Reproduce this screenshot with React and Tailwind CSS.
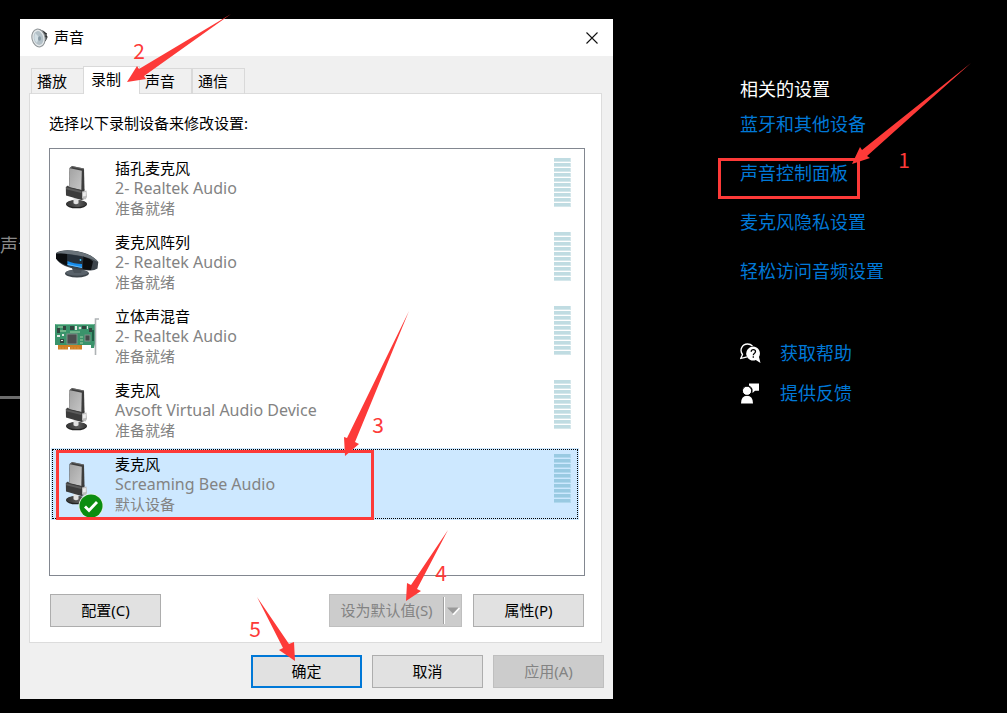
import React from "react";

const arrowShapes = {
  panel: "0,101 8,84 10,87 119,0 15,93 18,95",
  tab: "0,68 10,52 12,55 104,0 17,62 19,65",
  device: "1,145 0,126 3,127 65,0 11,131 15,133",
  setDefault: "0,71 1,53 5,55 42,0 11,59 15,61",
  ok: "38,64 22,53 26,51 0,0 32,47 37,45",
};

function Arrow({ shape, width, height, className }) {
  return (
    <svg
      aria-hidden="true"
      width={width}
      height={height}
      viewBox={`0 0 ${width} ${height}`}
      className={`pointer-events-none absolute z-20 max-w-none overflow-visible ${className}`}
    >
      <polygon points={arrowShapes[shape]} fill="#fd3a38" />
    </svg>
  );
}

function Step({ children, className }) {
  return (
    <span
      className={`pointer-events-none absolute z-20 w-4 text-center font-['Noto_Sans_CJK_SC',sans-serif] text-[21px] leading-4 text-[#fd3a38] ${className}`}
    >
      {children}
    </span>
  );
}

function SpeakerIcon() {
  return (
    <svg aria-hidden="true" width="18" height="20" viewBox="0 0 18 20">
      <path d="M8 1 L13 3 Q17 6 16 11 L12 16 L8 19Z" fill="#55595c" />
      <path d="M12 4 L16 6 M13 8 L16.500 9 M12 14 L15 12" stroke="#222" strokeWidth="1" />
      <ellipse cx="7.500" cy="10" rx="6.500" ry="9" transform="rotate(-12 7.500 10)" fill="#e4e8ea" stroke="#8d9396" strokeWidth="1" />
      <ellipse cx="7.500" cy="10" rx="4.800" ry="7" transform="rotate(-12 7.500 10)" fill="#b3c0c7" />
      <path d="M4 5 L8 9 L6 15 Q2 12 4 5Z" fill="#d3dfe5" />
      <ellipse cx="8.500" cy="10.500" rx="1.500" ry="2.200" fill="#8799a4" />
    </svg>
  );
}

function MicIcon({ id }) {
  const face = `${id}-face`;
  const base = `${id}-base`;
  return (
    <svg aria-hidden="true" width="48" height="48" viewBox="0 0 48 48">
      <defs>
        <linearGradient id={face} x1="0" y1="0" x2="1" y2="1">
          <stop offset="0" stopColor="#a2a2a2" />
          <stop offset="1" stopColor="#c6c6c6" />
        </linearGradient>
        <linearGradient id={base} x1="0" y1="0" x2="1" y2="0">
          <stop offset="0" stopColor="#333" />
          <stop offset="0.6" stopColor="#5a5a5a" />
          <stop offset="1" stopColor="#333" />
        </linearGradient>
      </defs>
      <ellipse cx="24.500" cy="42.300" rx="10.500" ry="4" fill="#222" />
      <ellipse cx="24.500" cy="41.500" rx="10.300" ry="3.600" fill={`url(#${base})`} />
      <path d="M21.500 36 H26.500 V41.300 Q24 43 21.500 41.300Z" fill="#e2e2e2" />
      <path d="M17.500 6 L20 4 L32 6.500 L32.500 28 L29 30 L17.300 26Z" fill="#3d3d3d" />
      <path d="M18 6.300 L29.800 8.700 L29.300 28 L17.300 25.500Z" fill={`url(#${face})`} />
      <path d="M18 6.300 L20.300 4.600 L31.800 7" fill="none" stroke="#777" strokeWidth="0.700" />
      <path d="M13.800 25 L16 23.500 L17.200 25 L29.300 28 L32.500 27.500 L32.500 37 L29.500 38 L14 33.500Z" fill="#3c3c3c" />
      <path d="M14 25.200 L29.300 29 V31 L14 27.200Z" fill="#5c5c5c" />
      <path d="M30 29.500 L34.500 28.500 L35 35 L33.500 37.500 L30 36.500Z" fill="#bdbdbd" />
      <path d="M31 30.500 L33.800 30 V34 L31 34.500Z" fill="#ececec" />
    </svg>
  );
}

function WebcamIcon() {
  return (
    <svg aria-hidden="true" width="48" height="48" viewBox="0 0 48 48">
      <ellipse cx="25" cy="37.500" rx="12" ry="4" fill="#3d444a" />
      <ellipse cx="25" cy="36.700" rx="11" ry="3" fill="#59626a" />
      <path d="M19 30 H31 L29 37 H22Z" fill="#4a5259" />
      <path d="M4 17 Q9 13.500 20 14.500 Q39 16.500 46.300 26 L45.500 32.500 Q42 35 37 34.500 Q23 34 13 30 Q7 27 4 22.500Z" fill="#3c444b" />
      <path d="M4 17.500 Q9 14 20 14.700 Q39 16.700 46 26 Q37 20.500 20 18.500 Q9 17 4 17.500Z" fill="#6a737a" />
      <path d="M4 17.800 Q9 17 15.500 18 V30 Q6 26 4 22.500Z" fill="#0b0d0f" />
      <path d="M31 20.500 Q37 22 41 25.500 L39 34 Q34 34 30.500 33Z" fill="#0b0d0f" />
      <path d="M15.500 18 L31.500 20.800 L30.500 32.500 L15.500 29.500Z" fill="#26303a" />
      <path d="M15.500 25 Q22 28 30 28 V32 L15.500 29Z" fill="#168cec" />
      <path d="M15.500 28 L30 31 V32 L15.500 29Z" fill="#62baf8" />
      <circle cx="28.500" cy="24" r="0.900" fill="#45caff" />
    </svg>
  );
}

function SoundCardIcon() {
  return (
    <svg aria-hidden="true" width="48" height="48" viewBox="0 0 48 48">
      <path d="M6 35 H30 V39.500 H18 V37 H16 V39.500 H6Z" fill="#cf7f24" />
      <path d="M8 37 V39 M11 37 V39 M14 37 V39 M20 37 V39 M23 37 V39 M26 37 V39" stroke="#e0a04a" strokeWidth="0.600" />
      <path d="M3 14 H43 V34 L42 38 H39 V35 H3Z" fill="#3a936b" />
      <path d="M3.500 14.500 H42" stroke="#70bc96" />
      <path d="M6 17 H11 M7 21 H14 M18 22 H28 M28 27 H31 M28 30 H31 M28 33 H31" stroke="#a4d3a7" />
      <path d="M5 18 H8 V23 H5Z M11 16 H14 V20 H11Z M18 16 H22 V20 H18Z M30 16 H34 V19 H30Z M37 18 H40 V22 H37Z M8 29 H12 V33 H8Z" fill="#32453f" />
      <path d="M5 25 H8 V27 H5Z M10 24 H12 V26 H10Z M23 16 H25 V20 H23Z M35 16 H36 V19 H35Z M9 30 H11 V31 H9Z" fill="#e4e9e5" />
      <rect x="15" y="24" width="10" height="10" fill="#4b4f4f" stroke="#7f8f89" />
      <rect x="33" y="25" width="5" height="6" fill="#434a49" stroke="#7f8f89" />
      <circle cx="28" cy="18" r="1.300" fill="#d9ddd8" />
      <path d="M47 9 H43.500 V45" fill="none" stroke="#aeb3b5" strokeWidth="1.600" />
      <path d="M41 20 V31" stroke="#174c39" strokeWidth="1.500" />
    </svg>
  );
}

function CheckBadge() {
  return (
    <svg aria-hidden="true" width="26" height="26" viewBox="0 0 26 26" className="absolute top-[35px] left-[26px]">
      <circle cx="13" cy="13" r="12.500" fill="#e3eee5" />
      <circle cx="13" cy="13" r="11.500" fill="#0b8d10" />
      <path d="M7 13.500 L11 17.500 L19 9" fill="none" stroke="#fff" strokeWidth="2.800" />
    </svg>
  );
}

function HelpIcon() {
  return (
    <svg aria-hidden="true" width="21" height="21" viewBox="0 0 21 21">
      <path d="M7 13.800 Q4.500 14.500 0.800 15.300 L2.500 11.500 Q0 8 1.700 4.600 Q3.500 1 7.500 1 Q10.500 1 12.500 3" fill="none" stroke="#fff" strokeWidth="1.300" />
      <path d="M13 3.500 a7 7 0 0 1 6 10.500 L20.500 20 L15.800 17 A7 7 0 1 1 13 3.500Z" fill="#fff" />
      <path d="M11.200 8.800 Q11.200 6.700 13.300 6.700 Q15.500 6.700 15.500 8.600 Q15.500 9.700 14.300 10.500 Q13.300 11.200 13.300 12.200 M13.300 13.300 V14.800" fill="none" stroke="#000" strokeWidth="1.300" />
    </svg>
  );
}

function FeedbackIcon() {
  return (
    <svg aria-hidden="true" width="21" height="21" viewBox="0 0 21 21">
      <path d="M1 20.500 Q1 12.700 7 12.700 Q13 12.700 13 20.500Z" fill="#fff" />
      <path d="M9 0.500 H19 V7.800 H15 L12.500 10 V6 Q11.500 3.500 9 2.500Z" fill="#fff" />
      <circle cx="7" cy="7.800" r="4.600" fill="#fff" stroke="#000" />
    </svg>
  );
}

function Meter({ active }) {
  return (
    <div aria-hidden="true" className="flex w-[17px] flex-col gap-px">
      {Array.from({ length: 10 }, (_, i) => (
        <div
          key={i}
          className={`h-1 border-r border-b ${
            active ? "border-[#b0d8ee] bg-[#99cae2]" : "border-[#d5e7eb] bg-[#c0dce2]"
          }`}
        />
      ))}
    </div>
  );
}

const devices = [
  { name: "插孔麦克风", driver: "2- Realtek Audio", state: "准备就绪", icon: <MicIcon id="jack" /> },
  { name: "麦克风阵列", driver: "2- Realtek Audio", state: "准备就绪", icon: <WebcamIcon /> },
  { name: "立体声混音", driver: "2- Realtek Audio", state: "准备就绪", icon: <SoundCardIcon /> },
  { name: "麦克风", driver: "Avsoft Virtual Audio Device", state: "准备就绪", icon: <MicIcon id="avsoft" /> },
  { name: "麦克风", driver: "Screaming Bee Audio", state: "默认设备", icon: <MicIcon id="bee" />, selected: true },
];

function Device({ device }) {
  return (
    <li
      role="option"
      aria-selected={Boolean(device.selected)}
      className={`relative flex h-[72px] pt-[6px] pr-2 ${device.selected ? "bg-[#cde8ff]" : ""}`}
    >
      {device.selected && <div className="pointer-events-none absolute inset-px border border-dotted border-black" />}
      <div className="relative mt-1 mr-[14px] ml-px h-12 w-12 shrink-0">
        {device.icon}
        {device.selected && <CheckBadge />}
      </div>
      <div className="flex-1 pl-px leading-5 text-[#838383]">
        <p className="text-black">{device.name}</p>
        <p className="text-[16px] leading-5">{device.driver}</p>
        <p>{device.state}</p>
      </div>
      <Meter active={device.selected} />
      {device.selected && (
        <>
          <div className="pointer-events-none absolute top-[2px] left-[5px] h-[70px] w-[318px] border-3 border-[#fd3a38]" />
          <Arrow shape="device" width={65} height={145} className="-top-[137px] left-[293px]" />
          <Step className="-top-8 left-[319px]">3</Step>
        </>
      )}
    </li>
  );
}

function PushButton({ children, kind = "normal" }) {
  const looks = {
    normal: "border border-[#adadad] bg-[#e1e1e1] text-black",
    primary: "border-2 border-[#0078d7] bg-[#e1e1e1] text-black",
    disabled: "border border-[#bfbfbf] bg-[#cccccc] text-[#838383]",
  };
  return (
    <button type="button" disabled={kind === "disabled"} className={`h-[33px] w-[111px] ${looks[kind]}`}>
      {children}
    </button>
  );
}

function SoundDialog() {
  const tab = "h-[26px] border border-b-0 border-[#d9d9d9] px-[5px]";
  return (
    <section
      role="dialog"
      aria-label="声音"
      className="mt-[19px] flex min-w-[593px] flex-1 flex-col self-start bg-[#f0f0f0] text-[15px] text-black"
    >
      <header className="flex h-[37px] items-center bg-white pl-[11px]">
        <SpeakerIcon />
        <h1 className="ml-[5px] flex-1">声音</h1>
        <button type="button" aria-label="关闭" className="flex h-full w-[42px] items-center justify-center">
          <svg aria-hidden="true" width="12" height="12" viewBox="0 0 12 12">
            <path d="M0.500 0.500 L11.500 11.500 M11.500 0.500 L0.500 11.500" stroke="#111" strokeWidth="1.100" />
          </svg>
        </button>
      </header>

      <div className="pt-[10px] pr-[11px] pl-[9px]">
        <div role="tablist" className="relative z-10 -mb-px flex items-end pl-[2px]">
          <button type="button" role="tab" aria-selected="false" className={`${tab} w-[52px] border-r-0 text-left`}>
            播放
          </button>
          <div className="relative">
            <button
              type="button"
              role="tab"
              aria-selected="true"
              className="block h-7 w-[57px] border border-b-0 border-[#d9d9d9] bg-white px-[7px] pb-[3px] text-left"
            >
              录制
            </button>
            <Arrow shape="tab" width={104} height={68} className="-top-[52px] left-[44px]" />
            <Step className="-top-6 left-[48px]">2</Step>
          </div>
          <button type="button" role="tab" aria-selected="false" className={`${tab} w-[52px] border-l-0 text-left`}>
            声音
          </button>
          <button type="button" role="tab" aria-selected="false" className={`${tab} w-[53px] text-left`}>
            通信
          </button>
        </div>

        <div role="tabpanel" className="border border-[#dcdcdc] bg-white pt-[18px] pr-4 pb-[15px] pl-[19px]">
          <p className="leading-[22px]">选择以下录制设备来修改设置:</p>
          <ul
            role="listbox"
            aria-label="录制设备"
            className="mt-[14px] flex min-h-[428px] flex-col gap-[2px] border border-[#828790] pt-[3px] pr-[5px] pl-px"
          >
            {devices.map((device) => (
              <Device key={device.name + device.driver} device={device} />
            ))}
          </ul>
          <div className="mx-px mt-[18px] flex">
            <PushButton>配置(C)</PushButton>
            <div className="relative mr-[11px] ml-auto flex h-[33px] w-[133px] border border-[#bfbfbf] bg-[#cccccc]">
              <button type="button" disabled className="flex-1 text-[#838383]">
                设为默认值(S)
              </button>
              <button
                type="button"
                disabled
                aria-label="更多默认选项"
                className="my-[2px] flex w-[18px] items-center justify-center border-l border-[#a0a0a0] shadow-[inset_1px_0_0_#fff]"
              >
                <svg aria-hidden="true" width="14" height="8" viewBox="0 0 14 8">
                  <path d="M7 8 L13.500 1" stroke="#fff" strokeWidth="1.500" />
                  <path d="M1 0.500 H12.500 L6.800 6.500Z" fill="#9a9a9a" />
                </svg>
              </button>
              <Arrow shape="setDefault" width={42} height={71} className="-top-[65px] left-[76px]" />
              <Step className="-top-[31px] left-[103px]">4</Step>
            </div>
            <PushButton>属性(P)</PushButton>
          </div>
        </div>
      </div>

      <footer className="flex justify-end gap-[10px] pt-3 pr-[9px] pb-[11px]">
        <div className="relative">
          <PushButton kind="primary">确定</PushButton>
          <Arrow shape="ok" width={38} height={64} className="-top-[58px] left-[6px]" />
          <Step className="-top-[35px] -left-1">5</Step>
        </div>
        <PushButton>取消</PushButton>
        <PushButton kind="disabled">应用(A)</PushButton>
      </footer>
    </section>
  );
}

function RelatedSettings() {
  return (
    <aside className="w-[394px] shrink-0 pt-[78px] pl-[127px] text-[18px] text-[#0078d7]">
      <h2 className="leading-[22px] text-white">相关的设置</h2>
      <ul className="leading-[49px]">
        <li>
          <a href="#bluetooth">蓝牙和其他设备</a>
        </li>
        <li className="relative">
          <a href="#sound-panel">声音控制面板</a>
          <div className="pointer-events-none absolute top-[9px] -left-[22px] h-[41px] w-[142px] border-3 border-[#fd3a38]" />
          <Arrow shape="panel" width={119} height={101} className="-top-[86px] left-[112px]" />
          <Step className="top-[2px] left-[156px]">1</Step>
        </li>
        <li>
          <a href="#mic-privacy">麦克风隐私设置</a>
        </li>
        <li>
          <a href="#ease-of-access">轻松访问音频设置</a>
        </li>
      </ul>
      <div className="mt-[37px] leading-10">
        <a href="#help" className="flex items-center gap-[19px]">
          <HelpIcon />
          获取帮助
        </a>
        <a href="#feedback" className="flex items-center gap-[19px]">
          <FeedbackIcon />
          提供反馈
        </a>
      </div>
    </aside>
  );
}

export default function App() {
  return (
    <main className="flex min-h-screen overflow-hidden bg-black font-['Noto_Sans','Noto_Sans_CJK_SC',sans-serif]">
      <div className="w-5 shrink-0 overflow-hidden pt-[234px] text-[18px] leading-[22px] whitespace-nowrap text-[#8a8a8a]">
        <p>声音</p>
        <div className="mt-[140px] h-[3px] bg-[#6c6c6c]" />
      </div>
      <SoundDialog />
      <RelatedSettings />
    </main>
  );
}
